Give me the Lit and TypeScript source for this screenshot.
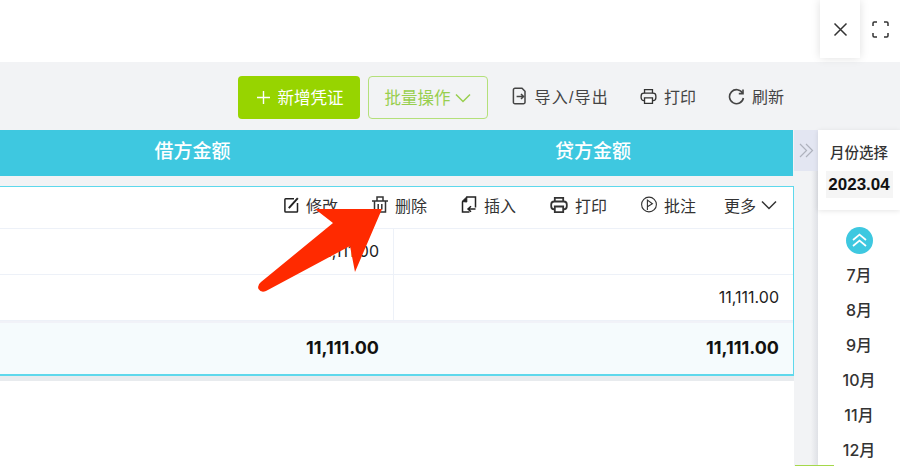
import { css, html, LitElement } from 'lit';
import { customElement } from 'lit/decorators.js';

const chevronDown = html`<svg class="chev" width="16" height="10" viewBox="0 0 16 10" fill="none" stroke="currentColor" stroke-width="1.5"><path d="M1 1.5l7 7 7-7" /></svg>`;

const exportIcon = html`<svg width="16" height="18" viewBox="0 0 16 18" fill="none" stroke="#444" stroke-width="1.5"><path d="M10 1.2H3a1.6 1.6 0 0 0-1.6 1.6v12.4A1.6 1.6 0 0 0 3 16.8h8.4a1.6 1.6 0 0 0 1.6-1.6V4.2z" /><path d="M4.6 9.5h7M9 7l2.6 2.5L9 12" /></svg>`;

const printerIcon = (size: number, weight: number) =>
  html`<svg width=${size} height=${size} viewBox="0 0 18 18" fill="none" stroke="#333" stroke-width=${weight}><path d="M4.800 5.500V1.800h8.400v3.700" /><rect x="1.200" y="5.500" width="15.600" height="7.800" rx="3" /><path d="M4.800 10.500h8.400v5.700H4.800z" fill="#fff" /></svg>`;

const refreshIcon = html`<svg width="17" height="17" viewBox="0 0 17 17" fill="none" stroke="#444" stroke-width="1.6"><path d="M14.600 5.200A7 7 0 1 0 15.400 10" /><path d="M15 1.400v4.200h-4.200" /></svg>`;

const editIcon = html`<svg width="15" height="16" viewBox="0 0 15 16" fill="none" stroke="#222" stroke-width="1.500"><path d="M10 1.700H1.700a.8.8 0 0 0-.8.8v11.800a.8.8 0 0 0 .8.8h11a.8.8 0 0 0 .8-.8V6" /><path d="M4.800 11.200l9-10" stroke-width="2" /></svg>`;

const trashIcon = html`<svg width="16" height="17" viewBox="0 0 16 17" fill="none" stroke="#333" stroke-width="1.500"><path d="M0 5h16M5 5V1h6v4M2.500 5v11h11V5M6.200 8v5.500M9.800 8v5.500" /></svg>`;

const insertIcon = html`<svg width="16" height="17" viewBox="0 0 16 17" fill="none" stroke="#222" stroke-width="1.500"><path d="M5.500 1h9v10.500M1.500 5.500v10.500h7" /><path d="M1 5.500L5.800.8v5.200z" fill="#222" stroke-width="1" /><path d="M14.500 13H7.500M10 10.200L7 13l3 2.800" /></svg>`;

const noteIcon = html`<svg width="16" height="17" viewBox="0 0 16 17" fill="none" stroke="#333" stroke-width="1.100"><circle cx="8" cy="8.500" r="7.400" /><path d="M6.400 14V4l5 3.800-5 3" /></svg>`;

@customElement('app-root')
export class AppRoot extends LitElement {
  static styles = css`
    :host {
      display: block;
      position: relative;
      width: 900px;
      height: 466px;
      overflow: hidden;
      background: #fff;
      color: #333;
      font-family: 'Liberation Sans', 'Noto Sans CJK SC', sans-serif;
    }

    .top {
      display: flex;
      justify-content: flex-end;
      height: 62px;
    }
    .tab {
      display: flex;
      align-items: center;
      justify-content: center;
      height: 58px;
      background: #fff;
    }
    .tab.close {
      width: 40px;
      margin-right: 1px;
      box-shadow: 0 0 9px rgba(0, 0, 0, 0.13);
      position: relative;
    }
    .tab.full {
      width: 39px;
    }

    .toolbar {
      display: flex;
      align-items: center;
      justify-content: flex-end;
      height: 68px;
      padding-right: 116px;
      background: #f2f3f5;
      font-size: 16px;
      color: #444;
    }
    .btn {
      box-sizing: border-box;
      display: flex;
      align-items: center;
      justify-content: center;
      height: 43px;
      border-radius: 4px;
      margin-top: 3px;
      font-size: 16.500px;
    }
    .btn span {
      position: relative;
      top: -1px;
    }
    .btn.primary {
      width: 122px;
      margin-right: 8px;
      padding-left: 3px;
      gap: 8px;
      background: #97d400;
      color: #fff;
    }
    .btn.outline {
      width: 120px;
      margin-right: 24px;
      gap: 4px;
      border: 1.500px solid #b4e07a;
      color: #98cf4e;
    }
    .tool {
      display: flex;
      align-items: center;
      gap: 7px;
    }
    .tool + .tool {
      margin-left: 32px;
    }
    .wide {
      letter-spacing: 1.200px;
      margin-right: -1px;
    }

    .body {
      display: flex;
      height: 336px;
    }
    .left {
      width: 794px;
      overflow: hidden;
    }
    .sheet {
      width: 802px;
      margin-left: -8px;
      background: #f2f3f5;
    }
    .head {
      display: grid;
      grid-template-columns: 401px 400px;
      height: 46px;
      margin-bottom: 10px;
      margin-right: 1px;
      background: #3ec8e0;
      color: #fff;
      font-size: 19px;
      font-weight: 500;
      line-height: 44px;
      text-align: center;
    }
    .panel {
      border: 1px solid #5ed8ec;
      border-bottom-width: 2px;
      background: #fff;
    }
    .actions {
      box-sizing: border-box;
      display: flex;
      align-items: center;
      justify-content: flex-end;
      height: 42px;
      padding: 0 16px 6px 0;
      border-bottom: 1px solid #edf1f8;
      font-size: 16px;
    }
    .action {
      display: flex;
      align-items: center;
      gap: 7px;
      margin-left: 34px;
    }
    .action.more {
      gap: 5px;
      margin-left: 28px;
    }
    .row {
      display: grid;
      grid-template-columns: 401px 399px;
      box-sizing: border-box;
      height: 46px;
      border-bottom: 1px solid #edf1f8;
      color: #222;
      font-family: Inter, 'Liberation Sans', sans-serif;
      font-size: 16px;
      line-height: 44px;
      text-align: right;
    }
    .row > div {
      padding-right: 14px;
    }
    .row > div:first-child {
      border-right: 1px solid #edf1f8;
    }
    .row.total {
      height: 53px;
      border-top: 2px solid #f1f2f8;
      border-bottom: 0;
      background: #f5fbfd;
      color: #111;
      font-size: 18px;
      font-weight: 700;
      line-height: 50px;
    }
    .row.total > div:first-child {
      border-right-color: transparent;
    }
    .strip {
      height: 5px;
      background: #e8ebee;
    }

    .rail {
      display: flex;
      flex: 1;
    }
    .collapse-col {
      width: 24px;
      background: linear-gradient(90deg, #f2f3f5 70%, #dfe1e6);
    }
    .collapse {
      display: flex;
      align-items: center;
      justify-content: center;
      height: 41px;
      background: #e3e6f2;
    }
    .months {
      flex: 1;
      background: #fff;
    }
    .card {
      box-sizing: border-box;
      height: 80px;
      padding-top: 15px;
      box-shadow: 0 1px 5px rgba(0, 0, 0, 0.1);
      text-align: center;
    }
    .card-title {
      font-size: 14.500px;
      font-weight: 500;
      line-height: 17px;
      color: #333;
    }
    .card-value {
      width: 67px;
      height: 27px;
      margin: 9px auto 0;
      background: #f5f5f5;
      color: #111;
      font-size: 17px;
      font-weight: 700;
      line-height: 27px;
    }
    .up {
      display: flex;
      align-items: center;
      justify-content: center;
      width: 27px;
      height: 27px;
      margin: 17px auto 4px;
      border-radius: 50%;
      background: #3ec8e0;
    }
    .month {
      height: 35px;
      color: #333;
      font-family: Inter, 'Noto Sans CJK SC', sans-serif;
      font-size: 16px;
      font-weight: 500;
      line-height: 35px;
      text-align: center;
    }

    .sliver {
      position: absolute;
      left: 795px;
      bottom: 0;
      width: 39px;
      height: 1px;
      background: #a5d84a;
    }
    .arrow {
      position: absolute;
      left: 0;
      top: 0;
      pointer-events: none;
    }
  `;

  private months = ['7月', '8月', '9月', '10月', '11月', '12月'];

  override render() {
    return html`
      <div class="top">
        <div class="tab close">
          <svg width="15" height="15" viewBox="0 0 15 15" fill="none" stroke="#333" stroke-width="1.500"><path d="M1.500 1.500l12 12M13.500 1.500l-12 12" /></svg>
        </div>
        <div class="tab full">
          <svg width="17" height="17" viewBox="0 0 17 17" fill="none" stroke="#333" stroke-width="1.500"><path d="M1 5V2.200C1 1.500 1.500 1 2.200 1H5M12 1h2.800c.7 0 1.200.5 1.200 1.200V5M16 12v2.800c0 .7-.5 1.200-1.200 1.200H12M5 16H2.200C1.500 16 1 15.500 1 14.800V12" /></svg>
        </div>
      </div>

      <div class="toolbar">
        <div class="btn primary">
          <svg width="13" height="13" viewBox="0 0 13 13" stroke="#fff" stroke-width="1.400"><path d="M6.500 0v13M0 6.500h13" /></svg>
          <span>新增凭证</span>
        </div>
        <div class="btn outline"><span>批量操作</span> ${chevronDown}</div>
        <div class="tool">${exportIcon}<span class="wide">导入/导出</span></div>
        <div class="tool">${printerIcon(17, 1.4)}<span>打印</span></div>
        <div class="tool">${refreshIcon}<span>刷新</span></div>
      </div>

      <div class="body">
        <div class="left">
          <div class="sheet">
            <div class="head"><div>借方金额</div><div>贷方金额</div></div>
            <div class="panel">
              <div class="actions">
                <div class="action">${editIcon}<span>修改</span></div>
                <div class="action">${trashIcon}<span>删除</span></div>
                <div class="action">${insertIcon}<span>插入</span></div>
                <div class="action">${printerIcon(18, 1.8)}<span>打印</span></div>
                <div class="action">${noteIcon}<span>批注</span></div>
                <div class="action more"><span>更多</span>${chevronDown}</div>
              </div>
              <div class="row"><div>11,111.00</div><div></div></div>
              <div class="row"><div></div><div>11,111.00</div></div>
              <div class="row total"><div>11,111.00</div><div>11,111.00</div></div>
            </div>
            <div class="strip"></div>
          </div>
        </div>

        <div class="rail">
          <div class="collapse-col">
            <div class="collapse">
              <svg width="15" height="15" viewBox="0 0 15 15" fill="none" stroke="#aeb2bd" stroke-width="1.200"><path d="M1 1l6.500 6.500L1 14M7 1l6.500 6.500L7 14" /></svg>
            </div>
          </div>
          <div class="months">
            <div class="card">
              <div class="card-title">月份选择</div>
              <div class="card-value">2023.04</div>
            </div>
            <div class="up">
              <svg width="15" height="15" viewBox="0 0 15 15" fill="none" stroke="#fff" stroke-width="1.700"><path d="M1 7l6.500-5.500L14 7M1 13l6.500-5.500L14 13" /></svg>
            </div>
            ${this.months.map(m => html`<div class="month">${m}</div>`)}
          </div>
        </div>
      </div>

      <div class="sliver"></div>
      <svg class="arrow" width="900" height="466" viewBox="0 0 900 466">
        <path d="M315 209H382L355 272 350 246 266 291Q261 293 258.500 289 257 285 261 282L333 223Z" fill="#ff2a00" />
      </svg>
    `;
  }
}

declare global {
  interface HTMLElementTagNameMap {
    'app-root': AppRoot;
  }
}
